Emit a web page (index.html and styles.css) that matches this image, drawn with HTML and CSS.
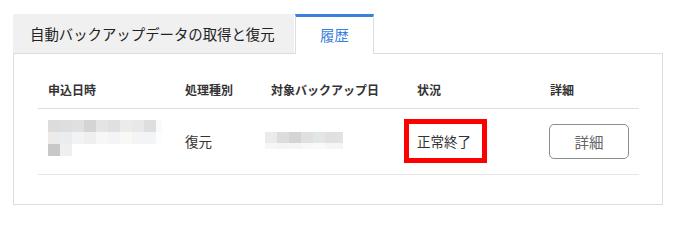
FILE: index.html
```html
<!DOCTYPE html>
<html lang="ja">
<head>
<meta charset="utf-8">
<title>履歴</title>
<link rel="stylesheet" href="styles.css">
</head>
<body>
<div class="page">
  <div class="tabs">
    <div class="tab">自動バックアップデータの取得と復元</div>
    <div class="tab active">履歴</div>
  </div>
  <div class="panel">
    <table class="history">
      <colgroup>
        <col class="c1"><col class="c2"><col class="c3"><col class="c4"><col class="c5">
      </colgroup>
      <thead>
        <tr>
          <th>申込日時</th>
          <th>処理種別</th>
          <th>対象バックアップ日</th>
          <th>状況</th>
          <th>詳細</th>
        </tr>
      </thead>
      <tbody>
        <tr>
          <td>
            <div class="blur blur-date">
              <i class="b-dc"></i><i class="b-dd"></i><i class="b-e0"></i><i class="b-d4"></i><i class="b-e3"></i><i class="b-df"></i><i class="b-ec"></i><i class="b-e8"></i><i class="b-dd"></i><i class="b-fa half"></i>
              <i class="b-ec"></i><i class="b-eb"></i><i class="b-f2"></i><i class="b-ef"></i><i class="b-f7"></i><i class="b-f3"></i><i class="b-f8"></i><i class="b-f3"></i><i class="b-f3"></i><i class="b-fd half"></i>
              <i class="b-c8"></i><i class="b-ee"></i>
            </div>
          </td>
          <td>復元</td>
          <td>
            <div class="blur blur-backup">
              <i class="b-ec"></i><i class="b-dc"></i><i class="b-d4"></i><i class="b-e0"></i><i class="b-e4"></i><i class="b-e0"></i><i class="b-e2 half"></i>
              <i class="b-f6 low"></i><i class="b-f3 low"></i><i class="b-f4 low"></i><i class="b-f8 low"></i><i class="b-fa low"></i><i class="b-f6 low"></i><i class="b-f5 low half"></i>
            </div>
          </td>
          <td class="status-cell"><span class="status">正常終了</span></td>
          <td><button class="detail-btn" type="button">詳細</button></td>
        </tr>
      </tbody>
    </table>
  </div>
</div>
</body>
</html>
```

FILE: styles.css
```css
* {
  box-sizing: border-box;
}

html, body {
  margin: 0;
  padding: 0;
  background: #ffffff;
}

body {
  font-family: "Noto Sans CJK JP", "Noto Sans", sans-serif;
  color: #333333;
}

.page {
  padding: 14px 10px 0 13px;
  width: 673px;
}

.tabs {
  display: flex;
  gap: 1px;
  align-items: flex-start;
  position: relative;
  z-index: 2;
}

.tab {
  height: 39px;
  line-height: 39px;
  font-size: 14.4px;
  white-space: nowrap;
}

.tab:first-child {
  width: 281px;
  padding-left: 17px;
  background: #f0f0f0;
  color: #222222;
}

.tab.active {
  width: 79px;
  height: 40px;
  background: #ffffff;
  border-top: 3px solid #3a7ede;
  border-left: 1px solid #dddddd;
  border-right: 1px solid #dddddd;
  color: #3a7ede;
  text-align: center;
  line-height: 36px;
  margin-bottom: -1px;
}

.panel {
  width: 650px;
  border: 1px solid #dddddd;
  padding: 18px 23px 29px 24px;
  position: relative;
  z-index: 1;
}

.history {
  width: 601px;
  border-collapse: collapse;
  table-layout: fixed;
}

.c1 { width: 137px; }
.c2 { width: 86px; }
.c3 { width: 146px; }
.c4 { width: 133px; }
.c5 { width: 99px; }

.history th {
  height: 36px;
  padding: 0 10px 1px;
  font-size: 12px;
  font-weight: bold;
  text-align: left;
  color: #333333;
  border-bottom: 1px solid #dedede;
  white-space: nowrap;
}

.history td {
  height: 66px;
  padding: 0 10px;
  font-size: 13.5px;
  color: #333333;
  border-bottom: 1px solid #e6e6e6;
  vertical-align: middle;
  white-space: nowrap;
}

.blur {
  display: grid;
  grid-auto-rows: 12px;
}

.blur i {
  display: block;
}

.blur-date {
  grid-template-columns: repeat(9, 12px) 6px;
  width: 114px;
  margin-bottom: 7px;
}

.blur-backup {
  grid-template-columns: repeat(6, 12px) 6px;
  grid-template-rows: 11px 6px;
  width: 78px;
  margin-left: -6px;
  margin-top: -2px;
}

.b-c8 { background: #c8c8c6; }
.b-d4 { background: #d4d4d5; }
.b-dc { background: #dcdcdc; }
.b-dd { background: #dddedf; }
.b-df { background: #dfe0e2; }
.b-e0 { background: #e0e0e0; }
.b-e2 { background: #e2e2e2; }
.b-e3 { background: #e3e4e6; }
.b-e4 { background: #e2e6e7; }
.b-e8 { background: #e8e8e8; }
.b-eb { background: #ebecee; }
.b-ec { background: #ecebea; }
.b-ee { background: #eeeff1; }
.b-ef { background: #efefef; }
.b-f2 { background: #f2f3f5; }
.b-f3 { background: #f3f4f5; }
.b-f4 { background: #f4f5f6; }
.b-f5 { background: #f5f5f5; }
.b-f6 { background: #f6f6f6; }
.b-f7 { background: #f7f7f7; }
.b-f8 { background: #f8f8f7; }
.b-fa { background: #fafafa; }
.b-fd { background: #fdfdfd; }

.history td.status-cell {
  padding-left: 0;
}

.status {
  display: inline-block;
  width: 83px;
  height: 44px;
  margin-left: -3px;
  border: 5px solid #ff0000;
  padding: 6px 0 0 8px;
  line-height: 22px;
  font-size: 13.5px;
  color: #333333;
}

.detail-btn {
  display: block;
  width: 80px;
  height: 35px;
  margin-left: -1px;
  background: #ffffff;
  border: 1px solid #8c8c8c;
  border-radius: 5px;
  font-family: "Noto Sans CJK JP", "Noto Sans", sans-serif;
  font-size: 14.5px;
  color: #666666;
  padding: 0;
  cursor: pointer;
}
```
